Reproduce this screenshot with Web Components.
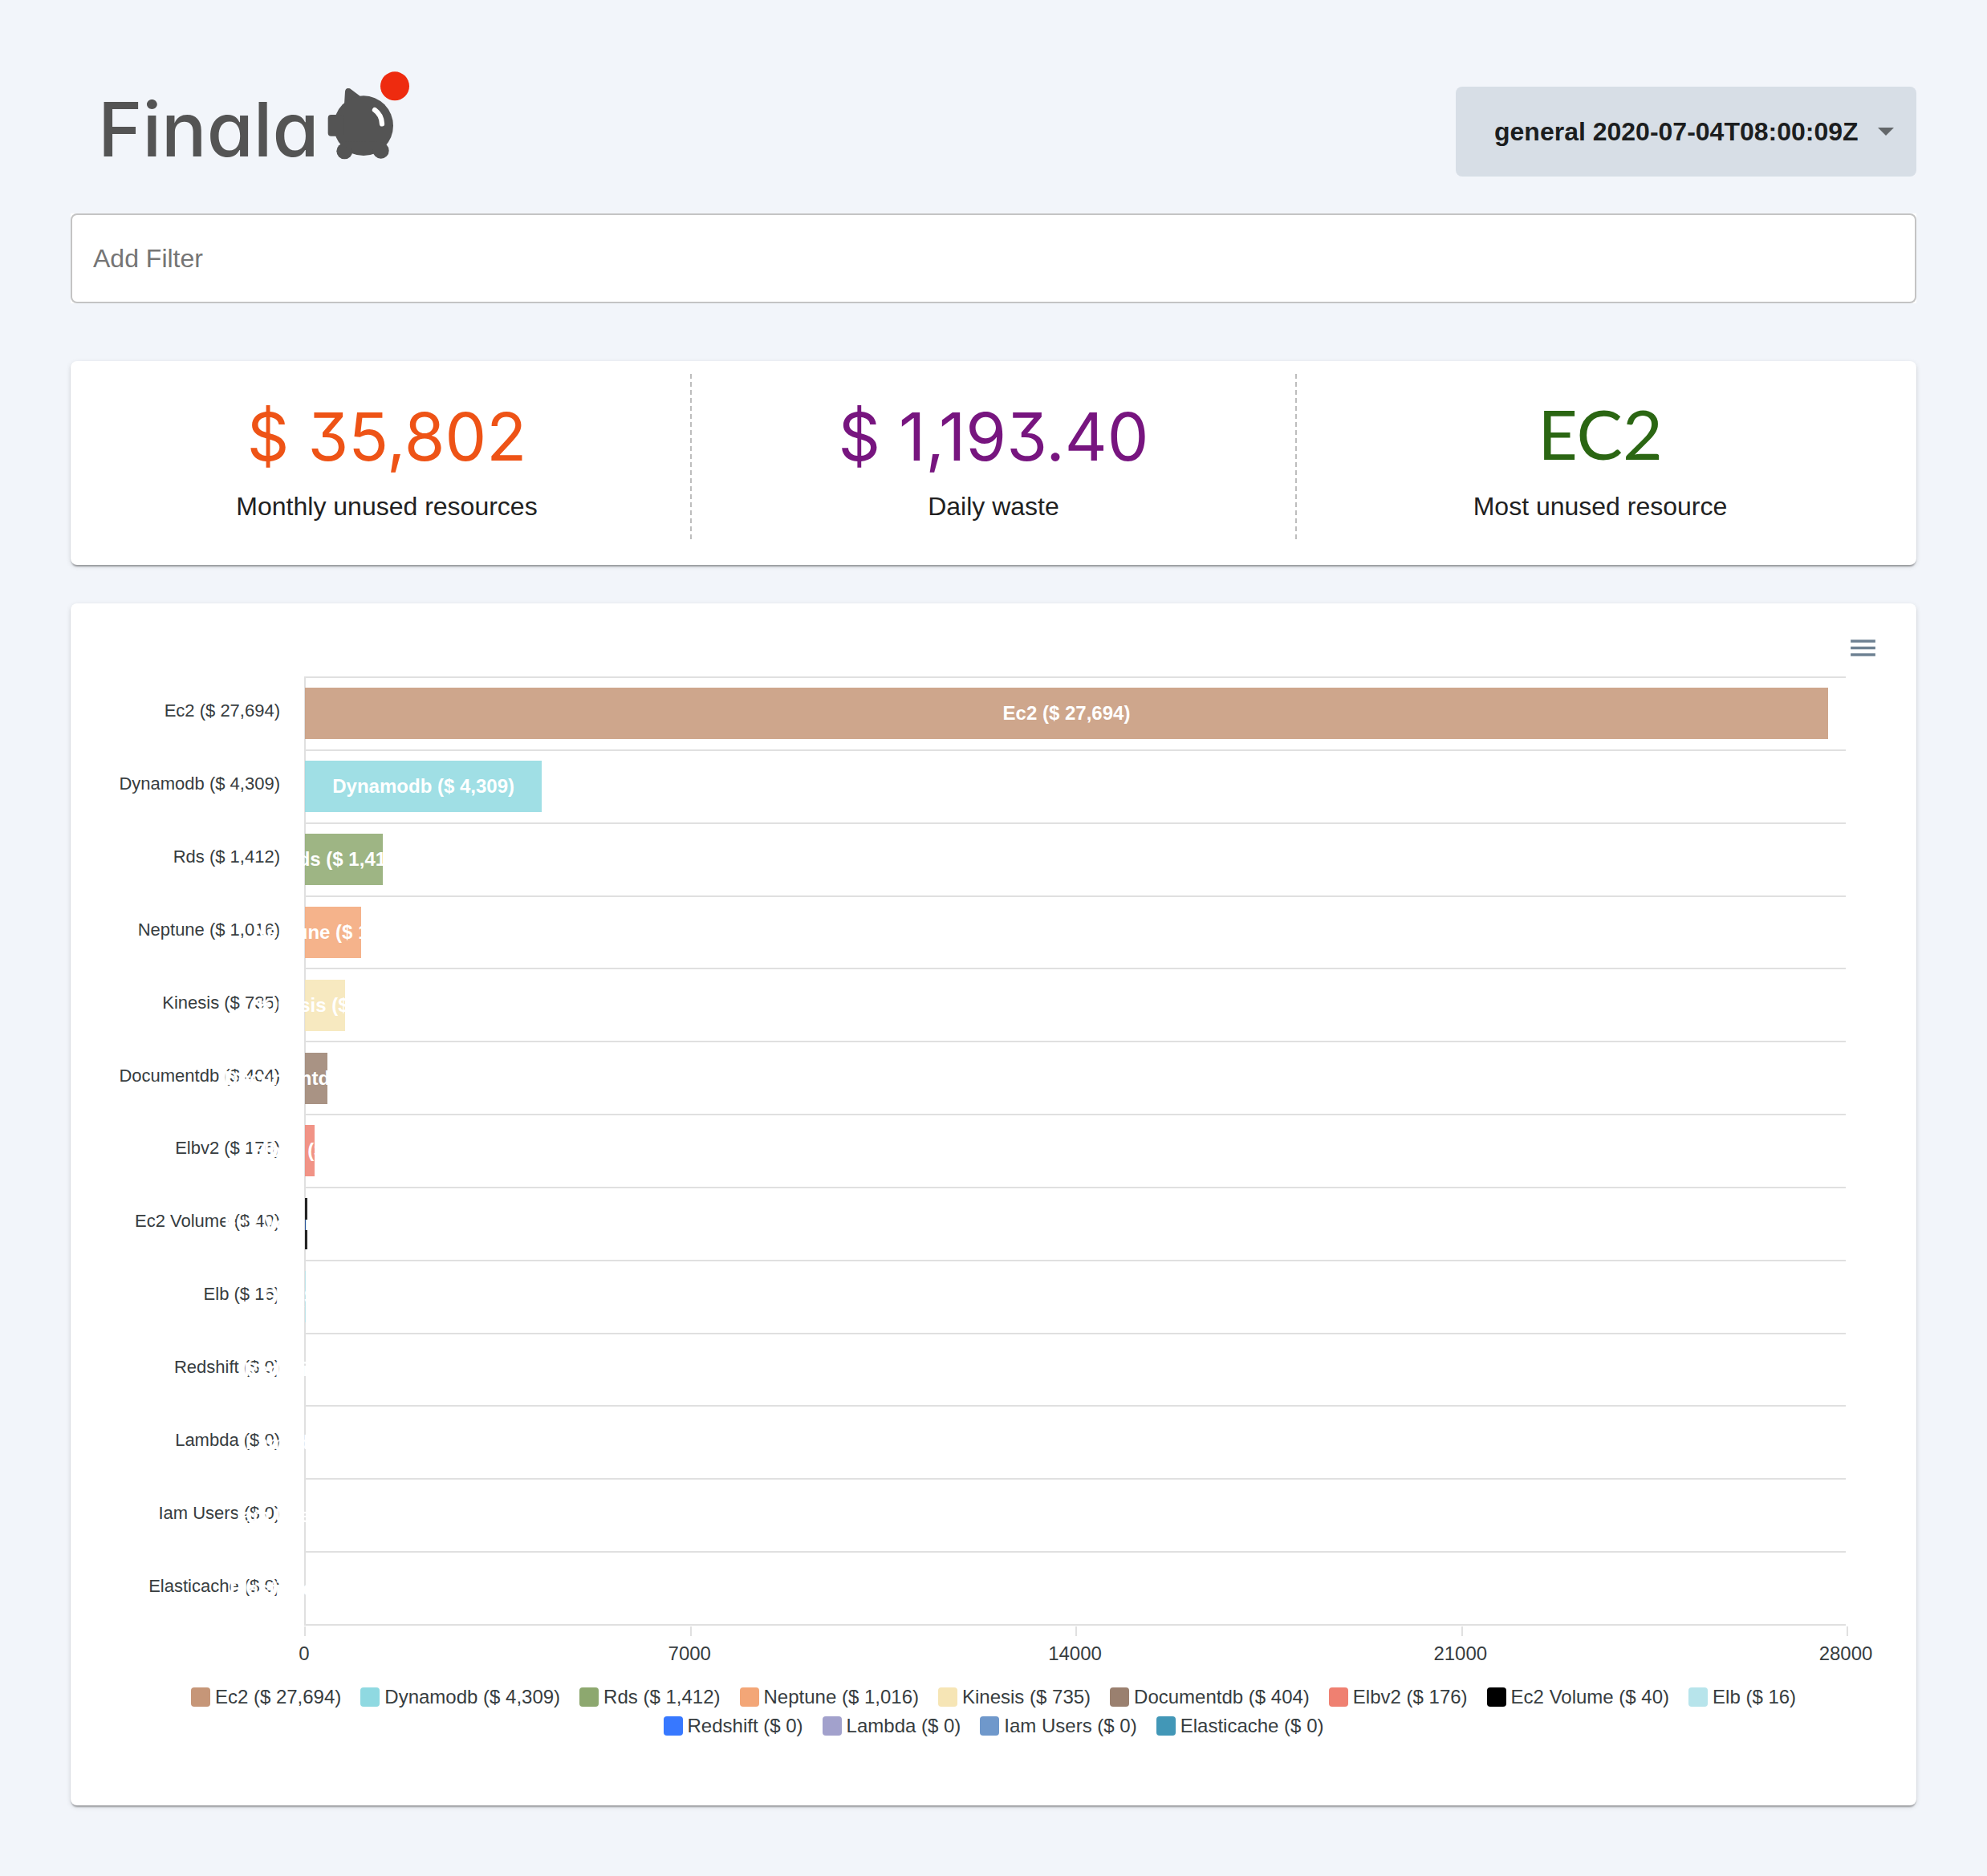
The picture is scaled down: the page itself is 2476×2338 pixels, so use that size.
<!DOCTYPE html>
<html lang="en">
<head>
<meta charset="utf-8">
<title>Finala</title>
<style>
  body {
    margin: 0;
    background: #f2f5fa;
    color: #212121;
    font-family: "Liberation Sans", Arial, sans-serif;
    font-size: 32px;
  }
</style>
</head>
<body>
<finala-app></finala-app>

<script>
const define = (name, html, setup) => {
  const template = document.createElement("template");
  template.innerHTML = html;
  customElements.define(name, class extends HTMLElement {
    constructor() {
      super();
      this.attachShadow({ mode: "open" }).append(template.content.cloneNode(true));
    }
    connectedCallback() {
      if (setup) setup(this, this.shadowRoot);
    }
  });
};

define("finala-logo", `
  <style>
    :host { display: block; }
    svg { display: block; }
    text { font-family: Inter, sans-serif; font-size: 94px; font-weight: 500; font-feature-settings: "cv11"; }
  </style>
  <svg width="392" height="132" viewBox="0 0 392 132" role="img" aria-label="Finala">
    <text x="2" y="107" fill="#545454">Finala</text>
    <g transform="translate(-40 -18) scale(.33333)">
      <g fill="#545454">
        <path d="M1047 180 L1050 132 Q1052 116 1068 121 L1106 149 L1060 200Z"/>
        <ellipse cx="1119" cy="260" rx="111" ry="112"/>
        <rect x="986" y="219" width="60" height="80" rx="12"/>
        <circle cx="1048" cy="355" r="30"/>
        <circle cx="1184" cy="353" r="30"/>
        <path d="M1026 318 L1060 345 L1190 345 L1210 322Z"/>
      </g>
      <path d="M1161 201 Q1187 220 1188 253" fill="none" stroke="#fff" stroke-width="19" stroke-linecap="round"/>
      <circle cx="1236" cy="112" r="54" fill="#ee2b0f"/>
    </g>
  </svg>`);

define("execution-select", `
  <style>
    :host { display: grid; align-items: center; }
    select, svg { grid-area: 1 / 1; }
    select {
      appearance: none; height: 112px; border: 0; border-radius: 8px;
      padding: 0 72px 0 48px; background: #d7dee6; color: #1c1e1f;
      font: bold 32px "Liberation Sans", Arial, sans-serif;
    }
    svg { justify-self: end; margin-right: 28px; pointer-events: none; }
  </style>
  <select aria-label="Execution"><option>general 2020-07-04T08:00:09Z</option></select>
  <svg width="20" height="10" viewBox="0 0 20 10"><path d="M0 0h20L10 10z" fill="#63676a"/></svg>`);

define("filter-bar", `
  <style>
    :host { display: block; background: #fff; }
    input {
      display: block; box-sizing: border-box; width: 100%; height: 112px; padding: 0 26px;
      border: 2px solid #c4c4c4; border-radius: 8px; background: transparent;
      font: 32px "Liberation Sans", Arial, sans-serif; color: #212121;
    }
    input::placeholder { color: #757575; opacity: 1; }
  </style>
  <input type="text" placeholder="Add Filter" aria-label="Add Filter">`);

define("paper-card", `
  <style>
    :host {
      display: block; background: #fff; border-radius: 8px;
      box-shadow: 0 4px 2px -2px rgba(0,0,0,.2), 0 2px 2px rgba(0,0,0,.14), 0 2px 6px rgba(0,0,0,.12);
    }
  </style>
  <slot></slot>`);

define("stat-strip", `
  <style>
    :host { display: grid; grid-template-columns: repeat(3, 1fr); padding: 16px 16px 32px; }
    ::slotted(:nth-child(2)) { border: 0 dashed #bdbdbd; border-width: 0 2px; }
  </style>
  <slot></slot>`);

define("stat-item", `
  <style>
    :host { display: flex; flex-direction: column; align-items: center; padding: 29px 0 21px; }
    .value { font: 82px/100px Inter, sans-serif; font-feature-settings: "cv09"; color: var(--tone); }
    :host([kind="name"]) .value { font: 86px/90px Lato, sans-serif; padding-bottom: 10px; }
    .label { line-height: 40px; margin-top: 16px; }
  </style>
  <div class="value"><slot name="value"></slot></div>
  <div class="label"><slot></slot></div>`);

define("bar-row", `
  <style>
    :host { display: flex; flex: 1; min-height: 0; }
    .name {
      flex: none; display: flex; align-items: center; justify-content: flex-end;
      box-sizing: border-box; width: 261px; padding-bottom: 4px; margin-right: 30px;
      font-size: 22px; color: #373d3f; white-space: nowrap;
    }
    .track {
      flex: 1; display: flex; align-items: center;
      border-top: 2px solid #e0e0e0; border-left: 2px solid #e0e0e0;
    }
    .bar {
      flex: none; display: flex; align-items: center; justify-content: center;
      height: 64px; margin-left: -1px;
      background: color-mix(in srgb, var(--tone) 85%, transparent);
    }
    .bar span { flex: none; font-size: 24px; font-weight: bold; color: #fff; white-space: nowrap; }
  </style>
  <div class="name"></div>
  <div class="track"><div class="bar"><span></span></div></div>`,
  (host, root) => {
    const label = host.getAttribute("label");
    root.querySelector(".name").textContent = label;
    root.querySelector(".bar span").textContent = label;
    root.querySelector(".bar").style.width = (host.getAttribute("amount") / 28000 * 100) + "%";
  });

define("value-axis", `
  <style>
    :host { display: block; margin-left: 291px; border-top: 2px solid #e0e0e0; }
    .ticks, .labels { display: flex; justify-content: space-between; }
    .ticks { margin: 1px -3px 0 0; }
    .ticks i { width: 2px; height: 12px; background: #e0e0e0; }
    .labels { margin-top: 8px; font-size: 24px; line-height: 28px; color: #373d3f; }
    .labels span { display: flex; justify-content: center; width: 0; }
  </style>
  <div class="ticks"><i></i><i></i><i></i><i></i><i></i></div>
  <div class="labels"><span>0</span><span>7000</span><span>14000</span><span>21000</span><span>28000</span></div>`);

define("legend-item", `
  <style>
    :host { display: flex; align-items: center; gap: 6px; height: 24px; font-size: 24px; color: #373d3f; white-space: nowrap; }
    i { width: 24px; height: 24px; border-radius: 4px; background: var(--tone); }
  </style>
  <i></i><slot></slot>`);

define("resource-chart", `
  <style>
    :host { display: block; padding: 35px 0 87px; }
    .toolbar { display: flex; justify-content: flex-end; padding-right: 46px; }
    button { display: block; width: 41px; height: 41px; padding: 0; border: 0; background: none; }
    svg { display: block; }
    .plot { margin: 15px 88px 0 0; }
    .rows { display: flex; flex-direction: column; height: 1181px; }
    .legend { display: flex; flex-wrap: wrap; justify-content: center; gap: 12px 24px; padding: 0 64px; margin-top: 28px; }
  </style>
  <div class="toolbar">
    <button aria-label="Menu"><svg width="41" height="41" viewBox="0 0 24 24"><path fill="#6e8192" d="M3 18h18v-2H3v2zm0-5h18v-2H3v2zm0-7v2h18V6H3z"/></svg></button>
  </div>
  <div class="plot"><div class="rows"></div><value-axis></value-axis></div>
  <div class="legend"></div>`,
  (host, root) => {
    const resources = [
      ["Ec2", 27694, "#c69678"],
      ["Dynamodb", 4309, "#8fd9e1"],
      ["Rds", 1412, "#8da86f"],
      ["Neptune", 1016, "#f3a677"],
      ["Kinesis", 735, "#f6e5b5"],
      ["Documentdb", 404, "#9a806f"],
      ["Elbv2", 176, "#ef8071"],
      ["Ec2 Volume", 40, "#000000"],
      ["Elb", 16, "#b7e4eb"],
      ["Redshift", 0, "#3778ff"],
      ["Lambda", 0, "#a2a1cc"],
      ["Iam Users", 0, "#6f98cb"],
      ["Elasticache", 0, "#4297b7"]
    ];
    for (const [name, amount, tone] of resources) {
      const label = `${name} ($ ${amount.toLocaleString("en-US")})`;
      const row = document.createElement("bar-row");
      row.setAttribute("label", label);
      row.setAttribute("amount", amount);
      row.style.setProperty("--tone", tone);
      root.querySelector(".rows").append(row);
      const item = document.createElement("legend-item");
      item.textContent = label;
      item.style.setProperty("--tone", tone);
      root.querySelector(".legend").append(item);
    }
  });

define("finala-app", `
  <style>
    :host { display: block; padding: 88px; }
    header { display: flex; justify-content: space-between; align-items: flex-end; padding-left: 32px; }
    filter-bar { margin-top: 46px; }
    .summary { margin-top: 72px; }
    .chart { margin-top: 48px; }
  </style>
  <header><finala-logo></finala-logo><execution-select></execution-select></header>
  <main>
    <filter-bar></filter-bar>
    <paper-card class="summary">
      <stat-strip>
        <stat-item style="--tone:#ee5316"><span slot="value">$ 35,802</span>Monthly unused resources</stat-item>
        <stat-item style="--tone:#77157f"><span slot="value">$ 1,193.40</span>Daily waste</stat-item>
        <stat-item kind="name" style="--tone:#2b6613"><span slot="value">EC2</span>Most unused resource</stat-item>
      </stat-strip>
    </paper-card>
    <paper-card class="chart"><resource-chart></resource-chart></paper-card>
  </main>`);
</script>
</body>
</html>
